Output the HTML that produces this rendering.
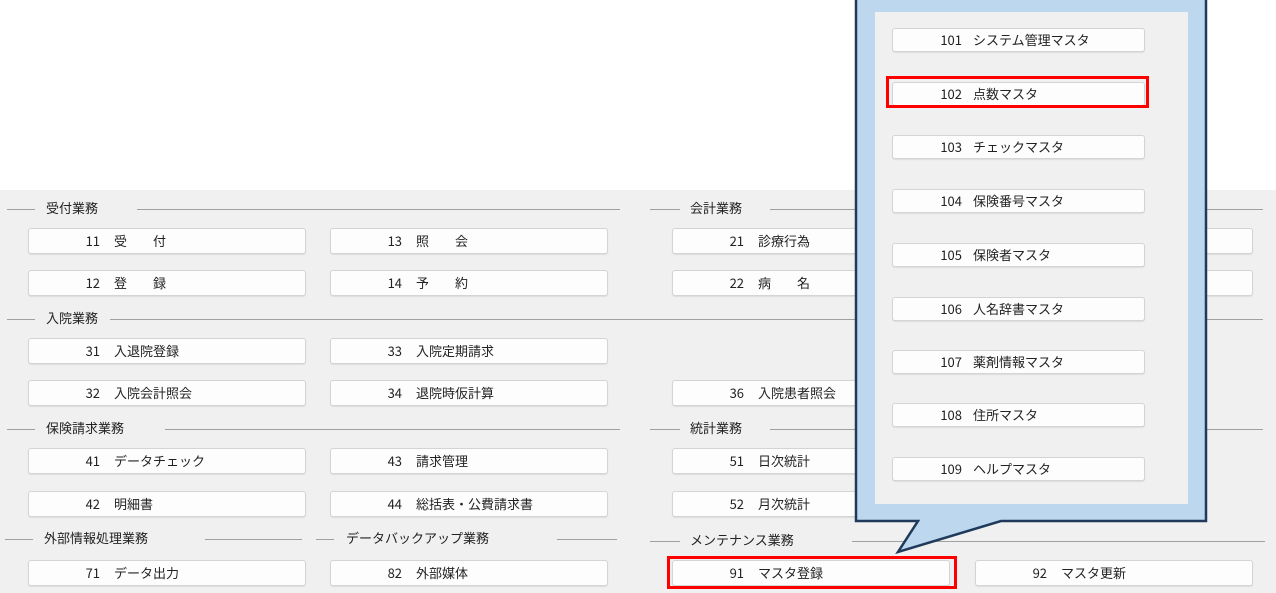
<!DOCTYPE html>
<html><head><meta charset="utf-8"><style>
*{margin:0;padding:0;box-sizing:border-box}
body{width:1276px;height:593px;background:#fff;position:relative;overflow:hidden;font-family:"Liberation Sans","Noto Sans CJK JP",sans-serif;font-size:13px;color:#222}
.bg{position:absolute;left:0;top:190px;width:1276px;height:403px;background:#f0f0f0}
.b{position:absolute;height:26px;background:#fdfdfd;border:1px solid #d4d4d4;border-radius:3px;box-shadow:0 1px 1px #ddd}
.b .n,.b .l{position:absolute;top:0;height:24px;line-height:24px;white-space:pre;font-family:"Noto Sans CJK JP","Liberation Sans",sans-serif}
.b .n{right:calc(100% - 71px)}
.b .l{left:85px}
.p .n,.p .l{height:22px;line-height:22px}
.h{position:absolute;white-space:nowrap;font-size:13px;line-height:18px;font-family:"Noto Sans CJK JP","Liberation Sans",sans-serif}
.ln{position:absolute;height:1px;background:#a0a0a0}
.red{position:absolute;border:3px solid #f00}
.p .n{right:calc(100% - 69px)}
.p .l{left:80px}
</style></head><body>
<div class="bg"></div>

<div class="ln" style="left:7px;top:209px;width:28px"></div><div class="h" style="left:46px;top:199px">受付業務</div><div class="ln" style="left:137px;top:209px;width:483px"></div>
<div class="ln" style="left:650px;top:209px;width:30px"></div><div class="h" style="left:690px;top:199px">会計業務</div><div class="ln" style="left:770px;top:209px;width:493px"></div>
<div class="ln" style="left:7px;top:319px;width:28px"></div><div class="h" style="left:46px;top:309px">入院業務</div><div class="ln" style="left:110px;top:319px;width:1153px"></div>
<div class="ln" style="left:7px;top:429px;width:28px"></div><div class="h" style="left:46px;top:419px">保険請求業務</div><div class="ln" style="left:165px;top:429px;width:455px"></div>
<div class="ln" style="left:650px;top:429px;width:30px"></div><div class="h" style="left:690px;top:419px">統計業務</div><div class="ln" style="left:770px;top:429px;width:493px"></div>
<div class="ln" style="left:5px;top:539px;width:28px"></div><div class="h" style="left:44px;top:529px">外部情報処理業務</div><div class="ln" style="left:205px;top:539px;width:97px"></div>
<div class="ln" style="left:316px;top:539px;width:18px"></div><div class="h" style="left:346px;top:529px">データバックアップ業務</div><div class="ln" style="left:557px;top:539px;width:60px"></div>
<div class="ln" style="left:650px;top:541px;width:30px"></div><div class="h" style="left:690px;top:531px">メンテナンス業務</div><div class="ln" style="left:852px;top:541px;width:413px"></div>

<div class="b" style="left:28px;top:228px;width:278px"><span class="n">11</span><span class="l">受　　付</span></div>
<div class="b" style="left:330px;top:228px;width:278px"><span class="n">13</span><span class="l">照　　会</span></div>
<div class="b" style="left:672px;top:228px;width:278px"><span class="n">21</span><span class="l">診療行為</span></div>
<div class="b" style="left:975px;top:228px;width:278px"></div>
<div class="b" style="left:28px;top:270px;width:278px"><span class="n">12</span><span class="l">登　　録</span></div>
<div class="b" style="left:330px;top:270px;width:278px"><span class="n">14</span><span class="l">予　　約</span></div>
<div class="b" style="left:672px;top:270px;width:278px"><span class="n">22</span><span class="l">病　　名</span></div>
<div class="b" style="left:975px;top:270px;width:278px"></div>
<div class="b" style="left:28px;top:338px;width:278px"><span class="n">31</span><span class="l">入退院登録</span></div>
<div class="b" style="left:330px;top:338px;width:278px"><span class="n">33</span><span class="l">入院定期請求</span></div>
<div class="b" style="left:28px;top:380px;width:278px"><span class="n">32</span><span class="l">入院会計照会</span></div>
<div class="b" style="left:330px;top:380px;width:278px"><span class="n">34</span><span class="l">退院時仮計算</span></div>
<div class="b" style="left:672px;top:380px;width:278px"><span class="n">36</span><span class="l">入院患者照会</span></div>
<div class="b" style="left:28px;top:448px;width:278px"><span class="n">41</span><span class="l">データチェック</span></div>
<div class="b" style="left:330px;top:448px;width:278px"><span class="n">43</span><span class="l">請求管理</span></div>
<div class="b" style="left:672px;top:448px;width:278px"><span class="n">51</span><span class="l">日次統計</span></div>
<div class="b" style="left:28px;top:491px;width:278px"><span class="n">42</span><span class="l">明細書</span></div>
<div class="b" style="left:330px;top:491px;width:278px"><span class="n">44</span><span class="l">総括表・公費請求書</span></div>
<div class="b" style="left:672px;top:491px;width:278px"><span class="n">52</span><span class="l">月次統計</span></div>
<div class="b" style="left:28px;top:560px;width:278px"><span class="n">71</span><span class="l">データ出力</span></div>
<div class="b" style="left:330px;top:560px;width:278px"><span class="n">82</span><span class="l">外部媒体</span></div>
<div class="b" style="left:672px;top:560px;width:278px"><span class="n">91</span><span class="l">マスタ登録</span></div>
<div class="b" style="left:975px;top:560px;width:278px"><span class="n">92</span><span class="l">マスタ更新</span></div>
<div class="red" style="left:667px;top:556px;width:290px;height:33px"></div>

<svg style="position:absolute;left:0;top:0" width="1276" height="593">
<polygon points="856,-2 1206,-2 1206,521 1001,521 898,552 918,521 856,521" fill="#bdd7ee" stroke="#1f3a5a" stroke-width="2.5" stroke-linejoin="miter"/>
<rect x="875" y="12" width="313" height="492" fill="#f0f0f0"/>
</svg>
<div class="b p" style="left:892px;top:28px;width:253px;height:24px"><span class="n">101</span><span class="l">システム管理マスタ</span></div>
<div class="b p" style="left:892px;top:82px;width:253px;height:24px"><span class="n">102</span><span class="l">点数マスタ</span></div>
<div class="red" style="left:886px;top:76px;width:263px;height:32px"></div>
<div class="b p" style="left:892px;top:135px;width:253px;height:24px"><span class="n">103</span><span class="l">チェックマスタ</span></div>
<div class="b p" style="left:892px;top:189px;width:253px;height:24px"><span class="n">104</span><span class="l">保険番号マスタ</span></div>
<div class="b p" style="left:892px;top:243px;width:253px;height:24px"><span class="n">105</span><span class="l">保険者マスタ</span></div>
<div class="b p" style="left:892px;top:297px;width:253px;height:24px"><span class="n">106</span><span class="l">人名辞書マスタ</span></div>
<div class="b p" style="left:892px;top:350px;width:253px;height:24px"><span class="n">107</span><span class="l">薬剤情報マスタ</span></div>
<div class="b p" style="left:892px;top:403px;width:253px;height:24px"><span class="n">108</span><span class="l">住所マスタ</span></div>
<div class="b p" style="left:892px;top:457px;width:253px;height:24px"><span class="n">109</span><span class="l">ヘルプマスタ</span></div>
</body></html>
